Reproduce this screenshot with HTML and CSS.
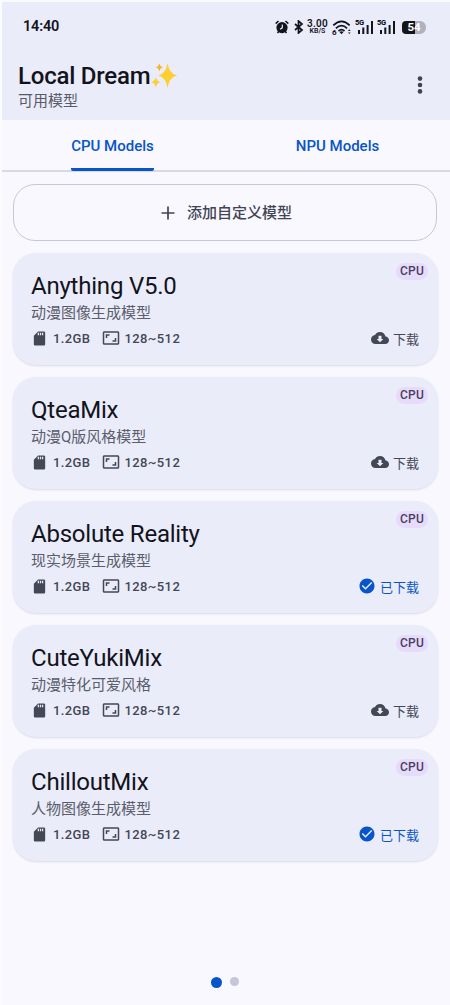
FILE: index.html
```html
<!DOCTYPE html>
<html lang="zh-CN">
<head>
<meta charset="utf-8">
<meta name="viewport" content="width=device-width">
<title>Local Dream</title>
<link rel="stylesheet" href="styles.css">
</head>
<body>
<svg class="defs" aria-hidden="true">
  <symbol id="sd" viewBox="0 0 24 24"><path fill-rule="evenodd" d="M18 2h-8L4 8v12c0 1.100.9 2 2 2h12c1.100 0 2-.9 2-2V4c0-1.100-.9-2-2-2zM9.500 4v3.500h1.800V4zM12.500 4v3.500h1.800V4zM15.500 4v3.500h1.800V4z"/></symbol>
  <symbol id="ratio" viewBox="0 0 24 24"><path d="M19 12h-2v3h-3v2h5v-5zM7 9h3V7H5v5h2V9zm14-6H3c-1.100 0-2 .9-2 2v14c0 1.100.9 2 2 2h18c1.100 0 2-.9 2-2V5c0-1.100-.9-2-2-2zm0 16H3V5h18v14z"/></symbol>
  <symbol id="cloud" viewBox="0 0 24 24"><path d="M19.350 10.040C18.670 6.590 15.640 4 12 4 9.110 4 6.600 5.640 5.350 8.040 2.340 8.360 0 10.910 0 14c0 3.310 2.690 6 6 6h13c2.760 0 5-2.240 5-5 0-2.640-2.050-4.780-4.650-4.960zM16.500 13.200l-4.500 4.500-4.500-4.500H10V9h4v4.200z"/></symbol>
  <symbol id="check" viewBox="0 0 24 24"><path d="M12 2C6.480 2 2 6.480 2 12s4.480 10 10 10 10-4.480 10-10S17.520 2 12 2zm-2 15l-5-5 1.410-1.410L10 14.170l7.590-7.590L19 8l-9 9z"/></symbol>
  <symbol id="signal" viewBox="0 0 20 18"><path d="M3 12h2v4H3zM7.300 9.500h2V16h-2zM11.600 7h2v9h-2zM16 3h2v13h-2z"/></symbol>
</svg>
<header class="top">
  <div class="status">
    <time class="clock">14:40</time>
    <div class="indicators">
      <svg class="alarm" viewBox="0 0 14 14"><circle cx="7" cy="7.600" r="5.600"/><path class="line" d="M.7 3.600 3.500 1M13.300 3.600 10.500 1M2.500 13l1.500-2M11.500 13 10 11"/><path class="hands" d="M7.300 4.500v3.300L5 9.200"/></svg>
      <svg class="bt" viewBox="0 0 10 14"><path d="M1 4l7 6-3.500 3V1L8 4 1 10"/></svg>
      <div class="speed"><span>3.00</span><small>KB/S</small></div>
      <svg class="wifi" viewBox="0 0 20 15"><path d="M1.300 5.400q8.200-8 16.400 0M3.900 8.300q5.600-5.400 11.200 0M6.500 11q3-2.700 6 0"/><path class="fill" d="m7.500 12 2 2.300 2-2.300q-2-1.500-4 0zM16 11l1.300-1.700L18.600 11zM16 12.400l1.300 1.700 1.300-1.700z"/><text x="0" y="14.500">6</text></svg>
      <div class="cell"><svg><use href="#signal"/></svg><span>5G</span></div>
      <div class="cell"><svg><use href="#signal"/></svg><span>5G</span></div>
      <div class="battery"><span>54</span></div>
    </div>
  </div>
  <div class="appbar">
    <div>
      <h1>Local Dream<svg class="sparkles" viewBox="0 0 28 28"><path d="M17.500 1Q19 11.500 27 13.500 19 15.500 17.500 26 16 15.500 8.500 13.500 16 11.500 17.500 1zM5.800 15Q6.600 19.200 10.500 20 6.600 20.800 5.800 25.500 5 20.800 1 20 5 19.200 5.800 15z"/><path class="small" d="M9.300 1.500Q10 4.600 13 5.300 10 6 9.300 9.500 8.600 6 5.800 5.300 8.600 4.600 9.300 1.500z"/></svg></h1>
      <p>可用模型</p>
    </div>
    <svg class="more" viewBox="0 0 6 18"><circle cx="3" cy="2.600" r="2.300"/><circle cx="3" cy="9" r="2.300"/><circle cx="3" cy="15.400" r="2.300"/></svg>
  </div>
</header>
<nav class="tabs"><a class="active">CPU Models</a><a>NPU Models</a></nav>
<main>
  <button class="add"><svg viewBox="0 0 14 14"><path d="M7 .5v13M.5 7h13"/></svg><span>添加自定义模型</span></button>
  <article class="card"><span class="tag">CPU</span><h2>Anything V5.0</h2><p>动漫图像生成模型</p><div class="meta"><svg class="sd"><use href="#sd"/></svg><span class="size">1.2GB</span><svg class="ratio"><use href="#ratio"/></svg><span>128~512</span><span class="state"><svg><use href="#cloud"/></svg>下载</span></div></article>
  <article class="card"><span class="tag">CPU</span><h2>QteaMix</h2><p>动漫Q版风格模型</p><div class="meta"><svg class="sd"><use href="#sd"/></svg><span class="size">1.2GB</span><svg class="ratio"><use href="#ratio"/></svg><span>128~512</span><span class="state"><svg><use href="#cloud"/></svg>下载</span></div></article>
  <article class="card"><span class="tag">CPU</span><h2>Absolute Reality</h2><p>现实场景生成模型</p><div class="meta"><svg class="sd"><use href="#sd"/></svg><span class="size">1.2GB</span><svg class="ratio"><use href="#ratio"/></svg><span>128~512</span><span class="state done"><svg><use href="#check"/></svg>已下载</span></div></article>
  <article class="card"><span class="tag">CPU</span><h2>CuteYukiMix</h2><p>动漫特化可爱风格</p><div class="meta"><svg class="sd"><use href="#sd"/></svg><span class="size">1.2GB</span><svg class="ratio"><use href="#ratio"/></svg><span>128~512</span><span class="state"><svg><use href="#cloud"/></svg>下载</span></div></article>
  <article class="card"><span class="tag">CPU</span><h2>ChilloutMix</h2><p>人物图像生成模型</p><div class="meta"><svg class="sd"><use href="#sd"/></svg><span class="size">1.2GB</span><svg class="ratio"><use href="#ratio"/></svg><span>128~512</span><span class="state done"><svg><use href="#check"/></svg>已下载</span></div></article>
</main>
<footer class="pager"><i class="current"></i><i></i></footer>
</body>
</html>
```
FILE: styles.css
```css
* { box-sizing: border-box; }
body { margin: 0; width: 450px; height: 1005px; display: flex; flex-direction: column; background: #f9f8ff; color: #12131c; font-family: Roboto, "Noto Sans CJK SC", sans-serif; border-left: 2px solid #fcfcff; overflow: hidden; }
svg { display: block; flex: none; fill: currentColor; }
h1, h2, p { margin: 0; font-weight: 400; }
.defs { display: none; }
.top { height: 120px; background: #eaecf9; border-top: 2px solid #fbfbff; }
.status { height: 50px; display: flex; align-items: center; justify-content: space-between; padding: 0 24px 0 21px; }
.clock { font-size: 14.5px; font-weight: 600; line-height: 20px; letter-spacing: -.2px; }
.indicators { display: flex; align-items: center; }
.alarm { width: 14px; height: 14px; margin-right: 5px; }
.alarm .line { stroke: currentColor; stroke-width: 1.5; fill: none; }
.alarm .hands { stroke: #eaecf9; stroke-width: 1.2; fill: none; }
.bt { width: 10px; height: 14px; fill: none; stroke: currentColor; stroke-width: 1.7; margin-right: 3px; }
.speed { width: 21px; display: flex; flex-direction: column; align-items: center; font-weight: 600; margin-right: 4px; }
.speed span { font-size: 10px; line-height: 8px; letter-spacing: .3px; }
.speed small { font-size: 7px; line-height: 6px; }
.wifi { width: 20px; height: 15px; fill: none; stroke: currentColor; stroke-width: 1.7; margin-right: 3px; }
.wifi .fill, .wifi text { fill: currentColor; stroke: none; }
.wifi text { font-size: 8px; font-weight: 700; }
.cell { position: relative; width: 20px; height: 18px; margin-right: 2px; }
.cell + .battery { margin-left: 3px; }
.cell svg { width: 20px; height: 18px; }
.cell span { position: absolute; left: 0; top: 1px; font-size: 7.5px; line-height: 8px; font-weight: 800; letter-spacing: -.3px; }
.battery { width: 24px; height: 13px; border-radius: 4px 6px 6px 4px; background: linear-gradient(90deg, #15151a 55%, #b0b1bd 55%); color: #fff; font-size: 11.5px; line-height: 13px; font-weight: 700; text-align: center; }
.appbar { display: flex; justify-content: space-between; padding: 10px 27px 0 16px; }
h1 { font-size: 24px; line-height: 28px; font-weight: 500; display: flex; letter-spacing: -.22px; }
.sparkles { width: 28px; height: 28px; fill: #fecf31; }
.sparkles .small { fill: #f9b52a; }
.appbar p { font-size: 15px; line-height: 20px; margin-top: 1px; color: #585a69; }
.more { width: 6px; height: 18px; margin-top: 14px; color: #404352; }
.tabs { height: 52px; display: grid; grid-template-columns: 1fr 1fr; margin-left: -2px; border-bottom: 2px solid #d7d9e6; color: #0854c9; font-size: 15px; font-weight: 500; }
.tabs a { justify-self: center; height: 51px; line-height: 52px; }
.tabs .active { border-bottom: 3px solid #0854c9; border-radius: 2px; }
main { padding: 12px 12px 0 11px; display: flex; flex-direction: column; gap: 12px; }
.add { height: 57px; margin: 0 1px 0 0; padding: 0 0 0 3px; border: 1px solid #c6c8d8; border-radius: 22px; background: none; color: #414453; font: 500 15px/20px Roboto, "Noto Sans CJK SC", sans-serif; display: flex; align-items: center; justify-content: center; gap: 12px; }
.add span { padding-top: 1px; }
.add svg { width: 14px; height: 14px; stroke: currentColor; stroke-width: 1.7; }
.card { position: relative; height: 112px; padding: 19px 19px 0 18px; border-radius: 23px; background: #eaecf9; box-shadow: 0 1px 2px #b0b2c466; }
.tag { position: absolute; right: 10px; top: 10px; width: 32px; height: 17px; border-radius: 9px; background: #e7dbfb; color: #47405f; font-size: 12px; line-height: 17px; font-weight: 500; text-align: center; letter-spacing: .3px; }
h2 { font-size: 24px; line-height: 28px; letter-spacing: -.22px; }
.card p { font-size: 15px; line-height: 22px; margin-top: 2px; color: #5b5d6b; }
.meta { display: flex; align-items: center; height: 20px; margin-top: 4px; color: #444755; font-size: 13px; font-weight: 500; letter-spacing: .4px; }
.sd, .ratio { width: 17px; height: 17px; }
.size { margin: 0 13px 0 5px; }
.ratio { width: 18px; height: 18px; margin: 0 4px 0 -1px; }
.state { display: flex; align-items: center; gap: 4px; margin-left: auto; letter-spacing: 0; font-weight: 400; }
.state svg { width: 18px; height: 18px; }
.done { color: #0854c9; }
.pager { margin-top: auto; height: 30px; display: flex; justify-content: center; gap: 8px; padding: 2px 3px 0 0; }
.pager i { width: 9px; height: 9px; border-radius: 50%; background: #c5c7d8; }
.pager .current { width: 11px; height: 11px; background: #0854c9; }
```
